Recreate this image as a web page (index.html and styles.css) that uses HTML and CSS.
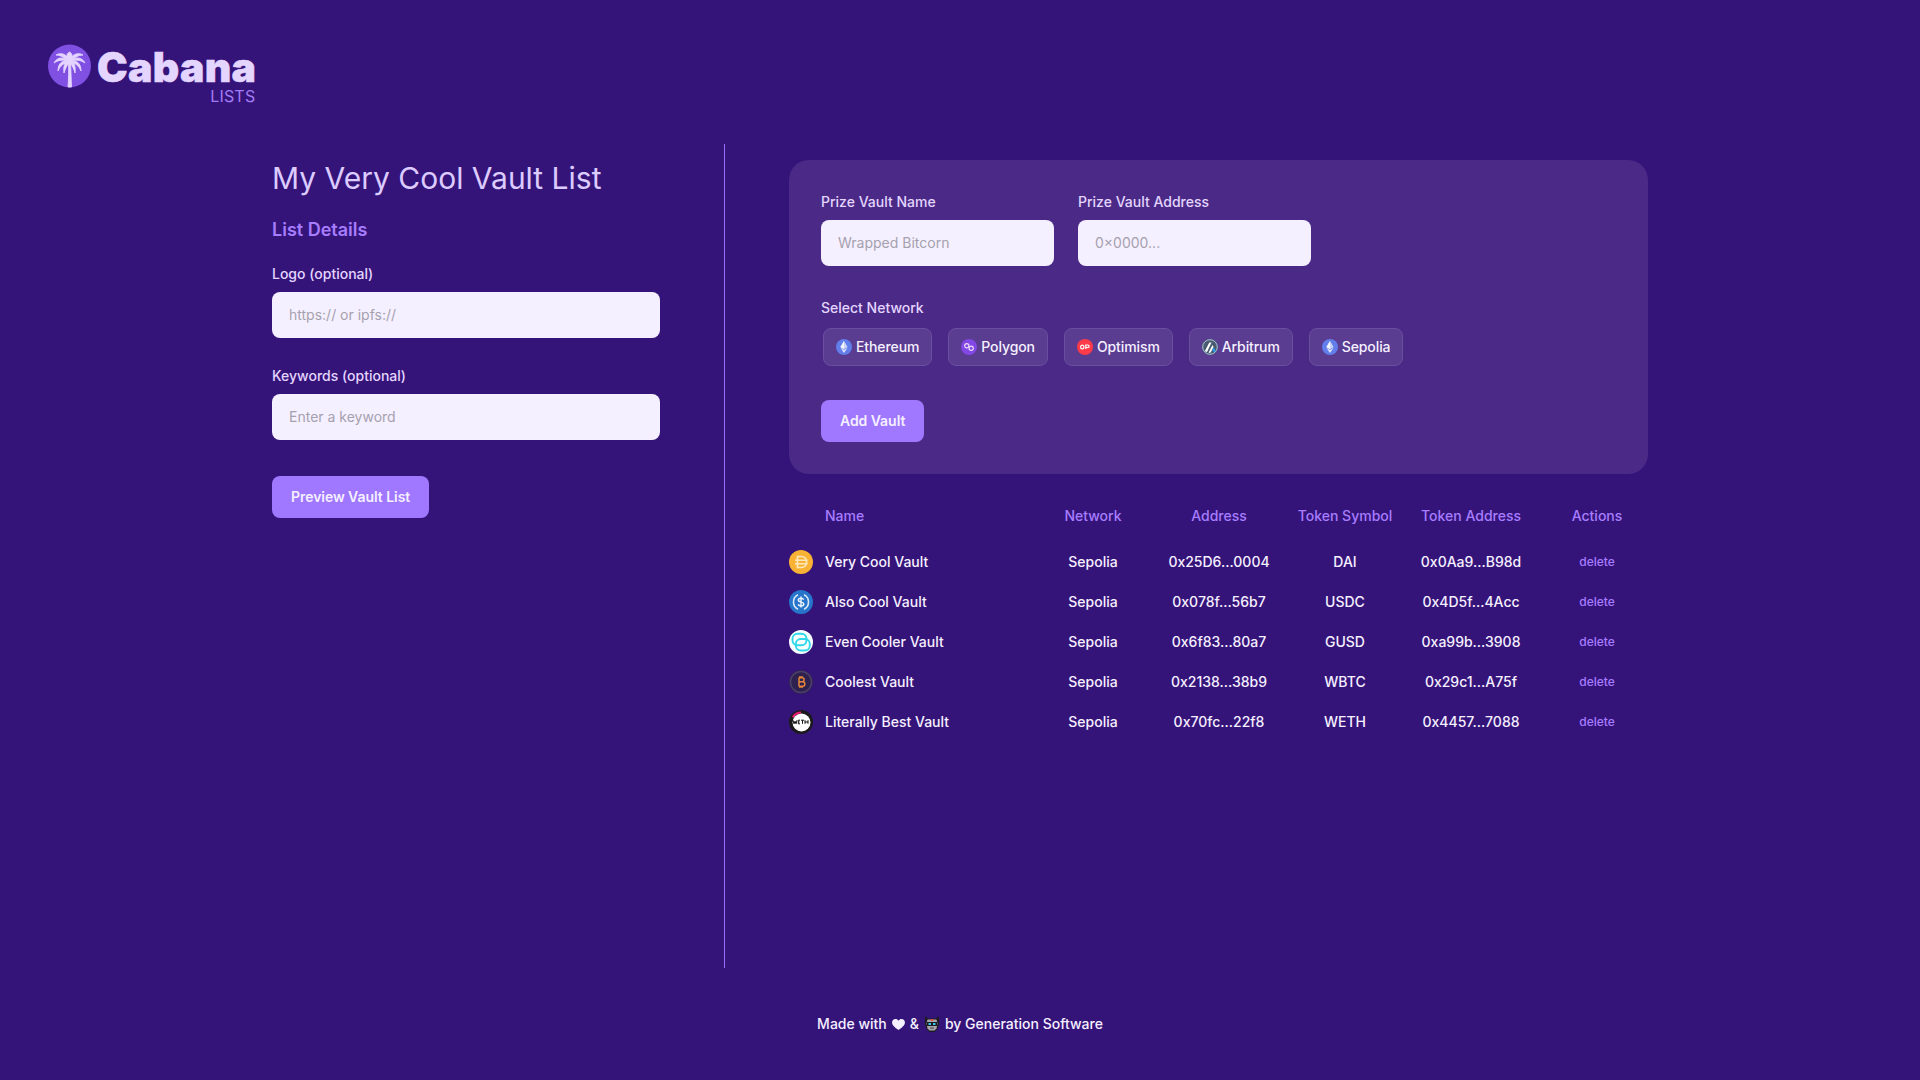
FILE: index.html
```html
<!DOCTYPE html>
<html lang="en">
<head>
  <meta charset="UTF-8">
  <title>Cabana Lists</title>
  <link rel="stylesheet" href="styles.css">
</head>
<body>
  <svg class="defs" width="0" height="0">
    <symbol id="eth" viewBox="0 0 16 16">
      <circle cx="8" cy="8" r="8" fill="#627eea"/>
      <path d="M8 2l3.600 6L8 10.200 4.400 8z" fill="#c9d4f8"/>
      <path d="M8 2v8.200L4.400 8z" fill="#f2f4fe"/>
      <path d="M8 11l3.600-2.200L8 14 4.400 8.800z" fill="#dfe5fb"/>
    </symbol>
    <symbol id="frond" viewBox="0 0 45 44">
      <path d="M22.500 18C21 11 15 7.500 9 11c5 0 9 3 13.500 7z"/>
      <path d="M22.500 18C17 12 10 13 7 19c4-3 10-4 15.500-1z"/>
      <path d="M22.500 18C16 15 11 19 11 27c2-5 6-8.500 11.500-9z"/>
      <path d="M22.500 18c-4.500-1-6.500 4-5.500 11 1-4 3-8 5.500-11z"/>
    </symbol>
  </svg>

  <header class="top">
    <div class="logo">
      <svg class="logo-mark" viewBox="0 0 45 44" fill="#e4d5ff" stroke="#e4d5ff" stroke-width="0.9" stroke-linejoin="round">
        <circle cx="22.500" cy="22" r="21.500" fill="#8050e3" stroke="none"/>
        <path d="M21 43c.7-8 .9-16 .5-25h2c.5 9 .6 17 1 25z"/>
        <path d="M22.500 18c-3.500-5-3.500-8 0-10 3.500 2 3.500 5 0 10z"/>
        <use href="#frond"/>
        <use href="#frond" transform="matrix(-1 0 0 1 45 0)"/>
      </svg>
      <div class="logo-text">
        <span class="logo-name">Cabana</span>
        <span class="logo-sub">LISTS</span>
      </div>
    </div>
  </header>

  <main class="page">
    <section class="details">
      <h1>My Very Cool Vault List</h1>
      <h2>List Details</h2>
      <label class="field">
        <span>Logo (optional)</span>
        <input type="text" placeholder="https:// or ipfs://">
      </label>
      <label class="field">
        <span>Keywords (optional)</span>
        <input type="text" placeholder="Enter a keyword">
      </label>
      <button class="btn preview-btn">Preview Vault List</button>
    </section>

    <section class="vaults">
      <form class="vault-form">
        <div class="form-row">
          <label class="field small">
            <span>Prize Vault Name</span>
            <input type="text" placeholder="Wrapped Bitcorn">
          </label>
          <label class="field small">
            <span>Prize Vault Address</span>
            <input type="text" placeholder="0×0000...">
          </label>
        </div>

        <div class="select-label">Select Network</div>
        <div class="networks">
          <div class="chip"><svg class="chip-icon"><use href="#eth"/></svg>Ethereum</div>
          <div class="chip">
            <svg class="chip-icon" viewBox="0 0 16 16">
              <circle cx="8" cy="8" r="8" fill="#8247e5"/>
              <circle cx="5.800" cy="6.800" r="2.100" fill="none" stroke="#e8dcfb" stroke-width="1.200"/>
              <circle cx="10.200" cy="9.200" r="2.100" fill="none" stroke="#e8dcfb" stroke-width="1.200"/>
            </svg>Polygon
          </div>
          <div class="chip">
            <svg class="chip-icon" viewBox="0 0 16 16">
              <circle cx="8" cy="8" r="8" fill="#ff3b4a"/>
              <ellipse cx="5.300" cy="8" rx="1.700" ry="1.900" fill="none" stroke="#fff" stroke-width="1.200"/>
              <path d="M8.800 10V6h2c1.700 0 1.700 2.500 0 2.500h-2" fill="none" stroke="#fff" stroke-width="1.200"/>
            </svg>Optimism
          </div>
          <div class="chip">
            <svg class="chip-icon" viewBox="0 0 16 16">
              <circle cx="8" cy="8" r="8" fill="#4a5a70"/>
              <circle cx="8" cy="8" r="7.300" fill="none" stroke="#a9c3d6" stroke-width="1"/>
              <path d="M2.800 12.300L7.300 3.500h2.200L5 13z" fill="#fff"/>
              <path d="M6.500 13.700l4-7.700 1 2-3 5.700z" fill="#fff"/>
              <path d="M10.300 11l1.500-2.500 1.900 3.500-1.700 1.300z" fill="#28a0f0"/>
            </svg>Arbitrum
          </div>
          <div class="chip"><svg class="chip-icon"><use href="#eth"/></svg>Sepolia</div>
        </div>

        <button type="button" class="btn">Add Vault</button>
      </form>

      <div class="vault-table">
        <div class="row head">
          <div class="name-cell">Name</div>
          <div>Network</div>
          <div>Address</div>
          <div>Token Symbol</div>
          <div>Token Address</div>
          <div>Actions</div>
        </div>

        <div class="row">
          <div class="name-cell">
            <svg class="token" viewBox="0 0 24 24">
              <circle cx="12" cy="12" r="12" fill="#f9b233"/>
              <path d="M8.500 6.500h4c6.800 0 6.800 11 0 11h-4z" fill="none" stroke="#fde7bb" stroke-width="1.700"/>
              <path d="M6 10.200h12.500M6 13.800h12.500" stroke="#fde7bb" stroke-width="1.400"/>
            </svg>
            Very Cool Vault
          </div>
          <div>Sepolia</div>
          <div>0x25D6...0004</div>
          <div>DAI</div>
          <div>0x0Aa9...B98d</div>
          <div><a class="delete">delete</a></div>
        </div>

        <div class="row">
          <div class="name-cell">
            <svg class="token" viewBox="0 0 24 24">
              <circle cx="12" cy="12" r="12" fill="#2775ca"/>
              <path d="M9 4.800a8 8 0 0 0 0 14.400M15 4.800a8 8 0 0 1 0 14.400" fill="none" stroke="#d6e6f7" stroke-width="1.600"/>
              <path d="M14.700 9.600c-.5-1-1.500-1.400-2.700-1.400-1.600 0-2.700.8-2.700 1.900 0 2.800 5.500 1.300 5.500 3.900 0 1.200-1.200 1.900-2.800 1.900-1.300 0-2.400-.5-2.900-1.500M12 6.600v10.800" fill="none" stroke="#eef5fc" stroke-width="1.400"/>
            </svg>
            Also Cool Vault
          </div>
          <div>Sepolia</div>
          <div>0x078f...56b7</div>
          <div>USDC</div>
          <div>0x4D5f...4Acc</div>
          <div><a class="delete">delete</a></div>
        </div>

        <div class="row">
          <div class="name-cell">
            <svg class="token" viewBox="0 0 24 24">
              <circle cx="12" cy="12" r="12" fill="#f8fdfe"/>
              <rect x="3.500" y="3.800" width="14" height="11.500" rx="5" fill="none" stroke="#2fd8ea" stroke-width="1.900"/>
              <rect x="6.800" y="9" width="14" height="11.500" rx="5" fill="none" stroke="#2fd8ea" stroke-width="1.900"/>
            </svg>
            Even Cooler Vault
          </div>
          <div>Sepolia</div>
          <div>0x6f83...80a7</div>
          <div>GUSD</div>
          <div>0xa99b...3908</div>
          <div><a class="delete">delete</a></div>
        </div>

        <div class="row">
          <div class="name-cell">
            <svg class="token" viewBox="0 0 24 24">
              <circle cx="12" cy="12" r="12" fill="#2e2150"/>
              <circle cx="12" cy="12" r="10.500" fill="none" stroke="#4d4068" stroke-width="1.500"/>
              <path d="M10 7.500v9M10 7.800h3.200c2.500 0 2.500 4 0 4H10M10 11.800h3.800c2.700 0 2.700 4.500 0 4.500H10M11 6v1.800M13 6v1.800M11 16.300V18M13 16.300V18" fill="none" stroke="#e5853a" stroke-width="1.500"/>
            </svg>
            Coolest Vault
          </div>
          <div>Sepolia</div>
          <div>0x2138...38b9</div>
          <div>WBTC</div>
          <div>0x29c1...A75f</div>
          <div><a class="delete">delete</a></div>
        </div>

        <div class="row">
          <div class="name-cell">
            <svg class="token" viewBox="0 0 24 24">
              <circle cx="12" cy="12" r="12" fill="#1a1a1a"/>
              <path d="M3 6.500A11 11 0 0 1 12 1.500v2A9 9 0 0 0 4.500 8z" fill="#ed1a78"/>
              <circle cx="12.500" cy="12.500" r="9" fill="#fff"/>
              <path d="M4 10.200l1 3.600 1-2.600 1 2.600 1-3.600M11 10.200H9.300v3.600H11M9.300 12h1.300M12 10.200h3M13.500 10.200v3.600M16 10.200v3.600M19 10.200v3.600M16 12h3" fill="none" stroke="#111" stroke-width="1"/>
            </svg>
            Literally Best Vault
          </div>
          <div>Sepolia</div>
          <div>0x70fc...22f8</div>
          <div>WETH</div>
          <div>0x4457...7088</div>
          <div><a class="delete">delete</a></div>
        </div>
      </div>
    </section>
  </main>

  <footer class="foot">
    <span>Made with</span>
    <svg class="heart" viewBox="0 0 14 12"><path d="M7 12C3 9 0 6.800 0 3.700 0 1.500 1.700 0 3.600 0 5 0 6.300.7 7 2 7.700.7 9 0 10.400 0 12.300 0 14 1.500 14 3.700 14 6.800 11 9 7 12z" fill="#f5f0ff"/></svg>
    <span>&amp;</span>
    <svg class="bot" viewBox="0 0 16 16">
      <path d="M1 0l3 2.500h8L15 0v8l-1.500 5-3 3h-5l-3-3L1 8z" fill="#1d1b22"/>
      <path d="M3.500 3.500h9l1 4-1 5-2 2h-5l-2-2-1-5z" fill="#a9a7ad"/>
      <rect x="6.800" y="3" width="2.400" height="2" fill="#d9553b"/>
      <rect x="3" y="6" width="10" height="4" fill="#1d1b22"/>
      <rect x="4.500" y="7" width="2.500" height="2" fill="#35c6e8"/>
      <rect x="9" y="7" width="2.500" height="2" fill="#35c6e8"/>
      <rect x="6" y="11.500" width="4" height="1.200" fill="#55535a"/>
    </svg>
    <span>by Generation Software</span>
  </footer>
</body>
</html>
```

FILE: styles.css
```css
* {
  box-sizing: border-box;
}

body {
  margin: 0;
  height: 100vh;
  overflow: hidden;
  display: flex;
  flex-direction: column;
  background-color: #35147a;
  color: #f5f0ff;
  font-family: Inter, "Liberation Sans", sans-serif;
  font-size: 14px;
  line-height: 20px;
}

.defs {
  position: absolute;
}

/* header */
.top {
  height: 144px;
  padding: 44px 0 0 47px;
}

.logo {
  display: flex;
  gap: 5px;
  align-items: flex-start;
}

.logo-mark {
  width: 45px;
  height: 44px;
}

.logo-text {
  display: flex;
  flex-direction: column;
  align-items: flex-end;
}

.logo-name {
  margin-top: 3px;
  font-size: 41px;
  font-weight: 900;
  line-height: 40px;
  letter-spacing: 0.3px;
  color: #e4d5ff;
  -webkit-text-stroke: 0.5px #e4d5ff;
}

.logo-sub {
  margin-right: 1px;
  font-size: 16px;
  line-height: 18px;
  letter-spacing: 0.2px;
  color: #a27cf5;
}

/* page columns */
.page {
  flex: 1;
  width: 1376px;
  margin: 0 auto;
  display: flex;
}

.details {
  width: 453px;
  padding: 16px 64px 0 0;
  border-right: 1px solid #9d6fff;
}

.vaults {
  flex: 1;
  padding: 16px 0 0 64px;
}

h1 {
  margin: 0;
  font-size: 30px;
  font-weight: 375;
  line-height: 36px;
  color: #dccbff;
}

h2 {
  margin: 20px 0 20px;
  font-size: 18px;
  font-weight: 600;
  line-height: 28px;
  color: #a77dff;
}

.field {
  display: block;
  margin-bottom: 28px;
  font-weight: 500;
  color: #e4d5ff;
}

.field span {
  display: block;
  margin-bottom: 8px;
}

.field input {
  display: block;
  width: 100%;
  height: 46px;
  padding: 0 17px 2px;
  border: 0;
  border-radius: 8px;
  background: #f5f0ff;
  font-family: inherit;
  font-size: 14px;
}

.field input::placeholder {
  color: #a5a1ae;
  opacity: 1;
}

.btn {
  height: 42px;
  padding: 0 19px 2px;
  border: 0;
  border-radius: 8px;
  background: #a077ff;
  color: #f5f0ff;
  font-family: inherit;
  font-size: 14px;
  font-weight: 600;
  letter-spacing: -0.05px;
}

.preview-btn {
  margin-top: 8px;
}

/* add vault form */
.vault-form {
  padding: 32px;
  border-radius: 20px;
  background: #4a2a86;
}

.form-row {
  display: flex;
  gap: 24px;
}

.field.small {
  width: 233px;
  margin-bottom: 32px;
}

.select-label {
  font-weight: 500;
  color: #e4d5ff;
}

.networks {
  display: flex;
  gap: 16px;
  margin: 10px 0 34px 2px;
}

.chip {
  display: flex;
  align-items: center;
  gap: 4px;
  height: 38px;
  padding: 0 12px;
  border: 1px solid #6b4f9f;
  border-radius: 8px;
  background: #5a3c91;
  font-weight: 500;
  letter-spacing: -0.1px;
}

.chip-icon {
  width: 16px;
  height: 16px;
}

/* vault table */
.vault-table {
  margin-top: 32px;
}

.row {
  display: grid;
  grid-template-columns: 1fr repeat(5, 102px);
  column-gap: 24px;
  align-items: center;
  height: 24px;
  margin-bottom: 16px;
  font-weight: 500;
  text-align: center;
  white-space: nowrap;
}

.row.head {
  height: 20px;
  margin-bottom: 24px;
  color: #a77dff;
}

.name-cell {
  display: flex;
  align-items: center;
  gap: 12px;
}

.head .name-cell {
  padding-left: 36px;
}

.token {
  width: 24px;
  height: 24px;
}

.delete {
  display: block;
  margin-top: -1px;
  font-size: 12px;
  font-weight: 550;
  color: #a77dff;
}

/* footer */
.foot {
  height: 112px;
  display: flex;
  align-items: center;
  justify-content: center;
  gap: 5px;
  font-weight: 500;
}

.heart {
  width: 13px;
  height: 11px;
}

.bot {
  width: 16px;
  height: 16px;
}
```
